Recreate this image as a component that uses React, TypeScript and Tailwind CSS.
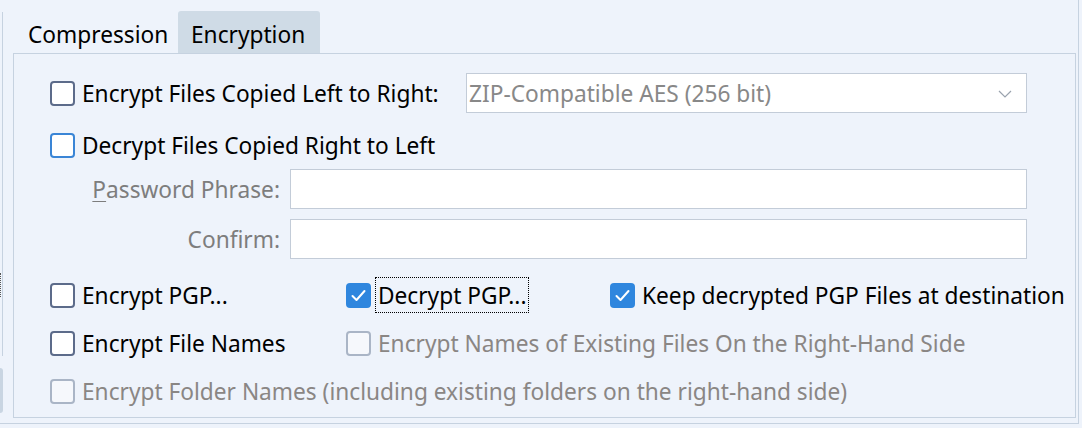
import React from "react";

const font = { fontFamily: '"Noto Sans", "Open Sans", sans-serif' };

function Box({ state }: { state: "off" | "focus" | "on" | "disabled" }) {
  if (state === "on") {
    return (
      <div className="w-[25px] h-[25px] rounded-[4px] bg-[#2f86de] flex items-center justify-center shrink-0">
        <svg width="17" height="17" viewBox="0 0 17 17">
          <polyline points="2.5,9 6.5,13 14.5,4" fill="none" stroke="white" strokeWidth="2" strokeLinecap="round" strokeLinejoin="round" />
        </svg>
      </div>
    );
  }
  const cls =
    state === "focus"
      ? "border-[#3a85d6] bg-white"
      : state === "disabled"
      ? "border-[#aab5c6] bg-[#f6f8fc]"
      : "border-[#5c6b8a] bg-white";
  return <div className={`w-[25px] h-[25px] rounded-[4px] border-2 shrink-0 ${cls}`} />;
}

function Check({
  state,
  label,
  focusRect,
}: {
  state: "off" | "focus" | "on" | "disabled";
  label: string;
  focusRect?: boolean;
}) {
  return (
    <div className="flex items-center">
      <Box state={state} />
      <span
        className={`ml-[4px] whitespace-nowrap leading-[32px] pl-[2px] pr-[1px] pt-[2px] ${
          state === "disabled" ? "text-[#8a8684]" : "text-black"
        } ${focusRect ? "border border-dotted border-black" : "border border-transparent"}`}
      >
        {label}
      </span>
    </div>
  );
}

export default function App() {
  return (
    <div className="w-[1082px] h-[428px] bg-[#eef3fb] overflow-hidden text-[22.7px]" style={font}>
      <div className="w-[1079px] h-[424px] border-r border-b border-[#c6d2e0] flex">
        {/* left stub */}
        <div className="w-[13px] flex flex-col shrink-0">
          <div className="mt-[12px] w-[3px] h-[344px] border-r border-[#c6d2e0] relative">
            <div className="absolute left-0 top-[261px] w-[1px] h-[24px] border-l border-dotted border-[#555]" />
          </div>
          <div className="mt-[12px] w-[3px] h-[45px] rounded-r-[3px] bg-[#c9d5e2]" />
        </div>
        {/* tabs */}
        <div className="flex-1 min-w-0 flex flex-col pt-[11px] pr-[2px]">
          <div className="flex h-[42px] items-stretch">
            <div className="w-[165px] pl-[15px] pt-[7px] flex items-center text-black">Compression</div>
            <div className="w-[142px] pl-[13px] pt-[7px] flex items-center bg-[#cfdbe6] rounded-t-[3px] text-black">
              Encryption
            </div>
          </div>
          <div className="h-[365px] min-w-0 border border-[#c6d2e0] pl-[36px] pr-[48px] pt-[19px]">
            {/* row 1 */}
            <div className="flex items-center h-[40px]">
              <div className="w-[416px] shrink-0">
                <Check state="off" label="Encrypt Files Copied Left to Right:" />
              </div>
              <div className="flex-1 h-[40px] bg-white border border-[#c3ccd8] flex items-center pl-[2px] pr-[14px] pt-[2px] text-[#888888]">
                <span className="flex-1">ZIP-Compatible AES (256 bit)</span>
                <svg width="14" height="10" viewBox="0 0 14 10">
                  <polyline points="1,2 7,8 13,2" fill="none" stroke="#9aa3ae" strokeWidth="1.2" />
                </svg>
              </div>
            </div>
            {/* row 2 */}
            <div className="flex items-center h-[40px] mt-[12px]">
              <Check state="focus" label="Decrypt Files Copied Right to Left" />
            </div>
            {/* row 3 */}
            <div className="flex items-center h-[40px] mt-[4px]">
              <div className="w-[230px] shrink-0 text-right text-[#7d7d7d] pt-[2px]">
                <span className="underline underline-offset-[3px] decoration-1">P</span>assword Phrase:
              </div>
              <div className="ml-[10px] flex-1 h-[40px] bg-white border border-[#c3ccd8]" />
            </div>
            {/* row 4 */}
            <div className="flex items-center h-[40px] mt-[10px]">
              <div className="w-[230px] shrink-0 text-right text-[#7d7d7d] pt-[2px]">Confirm:</div>
              <div className="ml-[10px] flex-1 h-[40px] bg-white border border-[#c3ccd8]" />
            </div>
            {/* row 5 */}
            <div className="flex items-center h-[40px] mt-[16px]">
              <div className="w-[296px] shrink-0">
                <Check state="off" label="Encrypt PGP..." />
              </div>
              <div className="w-[264px] shrink-0">
                <Check state="on" label="Decrypt PGP..." focusRect />
              </div>
              <Check state="on" label="Keep decrypted PGP Files at destination" />
            </div>
            {/* row 6 */}
            <div className="flex items-center h-[40px] mt-[8px]">
              <div className="w-[296px] shrink-0">
                <Check state="off" label="Encrypt File Names" />
              </div>
              <Check state="disabled" label="Encrypt Names of Existing Files On the Right-Hand Side" />
            </div>
            {/* row 7 */}
            <div className="flex items-center h-[40px] mt-[8px]">
              <Check state="disabled" label="Encrypt Folder Names (including existing folders on the right-hand side)" />
            </div>
          </div>
        </div>
      </div>
    </div>
  );
}
